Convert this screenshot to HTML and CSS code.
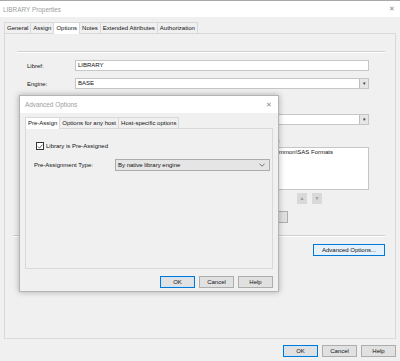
FILE: index.html
```html
<!DOCTYPE html>
<html lang="en">
  <head>
    <meta charset="UTF-8" />
    <title>LIBRARY Properties</title>
    <link rel="stylesheet" href="styles.css">
  </head>
  <body>
    <!-- Main properties window -->
    <div class="win">
      <div class="titlebar">
        <span class="title">LIBRARY Properties</span>
        <span class="close">&#x2715;</span>
      </div>
      <div class="tabs">
        <div class="tab">General</div>
        <div class="tab">Assign</div>
        <div class="tab active">Options</div>
        <div class="tab">Notes</div>
        <div class="tab">Extended Attributes</div>
        <div class="tab">Authorization</div>
      </div>
      <div class="panel">
        <div class="rule top-rule"></div>
        <div class="row">
          <span class="label">Libref:</span>
          <div class="field">LIBRARY</div>
        </div>
        <div class="row">
          <span class="label">Engine:</span>
          <div class="field combo">BASE<span class="drop">&#9662;</span></div>
        </div>
        <div class="row row-third">
          <span class="label"></span>
          <div class="field combo"><span class="drop">&#9662;</span></div>
        </div>
        <div class="path-label">Path(s):</div>
        <div class="listbox">
          <div class="item">SASHome\Common\SAS Formats</div>
        </div>
        <div class="movers">
          <span class="mover">&#9650;</span>
          <span class="mover">&#9660;</span>
        </div>
        <div class="browse-row">
          <button class="btn small">Browse...</button>
        </div>
        <div class="rule bottom-rule"></div>
        <div class="adv-row">
          <button class="btn adv">Advanced Options...</button>
        </div>
      </div>
      <div class="footer">
        <button class="btn default">OK</button>
        <button class="btn">Cancel</button>
        <button class="btn">Help</button>
      </div>
    </div>

    <!-- Advanced Options dialog, floating over the window -->
    <div class="dialog">
      <div class="titlebar dlg-title">
        <span class="title">Advanced Options</span>
        <span class="close">&#x2715;</span>
      </div>
      <div class="tabs dlg-tabs">
        <div class="tab active">Pre-Assign</div>
        <div class="tab">Options for any host</div>
        <div class="tab">Host-specific options</div>
      </div>
      <div class="dlg-panel">
        <label class="check">
          <span class="box">
            <svg width="7" height="7" viewBox="0 0 7 7"><path d="M1 3.6 L2.8 5.4 L6.2 1.4" fill="none" stroke="#333" stroke-width="0.9"/></svg>
          </span>
          Library is Pre-Assigned
        </label>
        <div class="pre-row">
          <span class="pre-label">Pre-Assignment Type:</span>
          <div class="select">
            By native library engine
            <svg class="chev" width="6" height="4" viewBox="0 0 6 4"><path d="M0.5 0.8 L3 3.2 L5.5 0.8" fill="none" stroke="#555" stroke-width="0.8"/></svg>
          </div>
        </div>
      </div>
      <div class="footer dlg-footer">
        <button class="btn default">OK</button>
        <button class="btn">Cancel</button>
        <button class="btn">Help</button>
      </div>
    </div>
  </body>
</html>
```

FILE: styles.css
```css
* {
  box-sizing: border-box;
}

body {
  margin: 0;
  width: 400px;
  height: 361px;
  overflow: hidden;
  background: #f0f0f0;
  font-family: "Liberation Sans", Arial, sans-serif;
  font-size: 6px;
  color: #111;
  position: relative;
}

.win {
  height: 361px;
  border-top: 1px solid #a9a9a9;
}

.titlebar {
  height: 16px;
  background: #fff;
  display: flex;
  align-items: center;
  justify-content: space-between;
  padding: 0 5px 0 3px;
}

.title {
  color: #9c9c9c;
  font-size: 6.4px;
}

.close {
  color: #8a8a8a;
  font-size: 7px;
}

.tabs {
  display: flex;
  margin: 5px 0 0 4px;
  height: 11px;
  align-items: flex-end;
  position: relative;
  z-index: 1;
}

.tab {
  height: 11px;
  line-height: 10px;
  padding: 0 2px;
  border: 1px solid #d9d9d9;
  border-bottom: none;
  margin-right: -1px;
  background: #f0f0f0;
}

.tab.active {
  background: #fff;
  height: 12px;
  margin-bottom: -1px;
}

.panel {
  margin-left: 4px;
  width: 392px;
  height: 306px;
  border: 1px solid #d9d9d9;
  padding: 17px 10px 0 11px;
}

.rule {
  height: 1px;
  background: #d0d0d0;
  border-bottom: 1px solid #fff;
  box-sizing: content-box;
}

.top-rule {
  margin-left: 1px;
}

.row {
  display: flex;
  align-items: center;
  margin-top: 7px;
  height: 11px;
}

.row:first-of-type {
  margin-top: 10px;
}

.row-third {
  margin-top: 25px;
}

.label {
  width: 59px;
  padding-left: 11px;
}

.field {
  width: 294px;
  height: 11px;
  background: #fff;
  border: 1px solid #c6c6c6;
  line-height: 9px;
  padding-left: 2px;
  position: relative;
}

.combo .drop {
  position: absolute;
  right: 0;
  top: 0;
  width: 9px;
  height: 9px;
  background: #e6e6e6;
  border-left: 1px solid #c0c0c0;
  font-size: 5px;
  line-height: 9px;
  text-align: center;
  color: #333;
}

.path-label {
  margin: 12px 0 0 59px;
  width: 205px;
  text-align: right;
  line-height: 8px;
}

.listbox {
  margin: 2px 0 0 59px;
  width: 294px;
  height: 43px;
  background: #fff;
  border: 1px solid #c6c6c6;
}

.item {
  text-align: right;
  padding-right: 35px;
  line-height: 9px;
  white-space: nowrap;
  overflow: hidden;
}

.movers {
  display: flex;
  gap: 5px;
  margin: 3px 0 0 281px;
}

.mover {
  width: 10px;
  height: 11px;
  background: #d9d9d9;
  color: #9a9a9a;
  font-size: 5px;
  line-height: 11px;
  text-align: center;
}

.browse-row {
  margin: 7px 0 0 210px;
}

.btn {
  font-family: inherit;
  font-size: 6px;
  color: #111;
  height: 12px;
  width: 35px;
  padding: 0;
  background: #e1e1e1;
  border: 1px solid #adadad;
  line-height: 10px;
}

.small {
  width: 62px;
}

.bottom-rule {
  margin-top: 12px;
  margin-left: -3px;
}

.adv-row {
  display: flex;
  justify-content: flex-end;
  margin-top: 7px;
}

.btn.adv {
  width: 72px;
  background: #e5f1fb;
  border-color: #0078d7;
}

.btn.default {
  border-color: #0078d7;
  box-shadow: inset 0 0 0 1px #cfe3f7;
}

.footer {
  display: flex;
  justify-content: flex-end;
  gap: 4px;
  padding: 6px 4px 0 0;
}

/* Advanced Options dialog */
.dialog {
  position: absolute;
  left: 19px;
  top: 95px;
  width: 260px;
  height: 197px;
  background: #f0f0f0;
  border: 1px solid #b4b4b4;
  box-shadow: 0 0 6px rgba(0, 0, 0, 0.3);
}

.dlg-title {
  height: 17px;
  padding: 0 6px 0 5px;
}

.dlg-tabs {
  margin: 4px 0 0 5px;
}

.dlg-panel {
  margin: 0 5px;
  height: 141px;
  border: 1px solid #d9d9d9;
  padding: 13px 0 0 10px;
}

.check {
  display: flex;
  align-items: center;
  gap: 2px;
}

.box {
  width: 8px;
  height: 8px;
  border: 1px solid #333;
  background: #fff;
  display: flex;
  align-items: center;
  justify-content: center;
}

.pre-row {
  display: flex;
  align-items: center;
  margin-top: 9px;
}

.pre-label {
  width: 81px;
  margin-left: -2px;
}

.select {
  width: 155px;
  height: 12px;
  background: #e5e5e5;
  border: 1px solid #acacac;
  line-height: 10px;
  padding-left: 2px;
  position: relative;
}

.chev {
  position: absolute;
  right: 4px;
  top: 3px;
}

.dlg-footer {
  padding: 7px 5px 0 0;
}
```
